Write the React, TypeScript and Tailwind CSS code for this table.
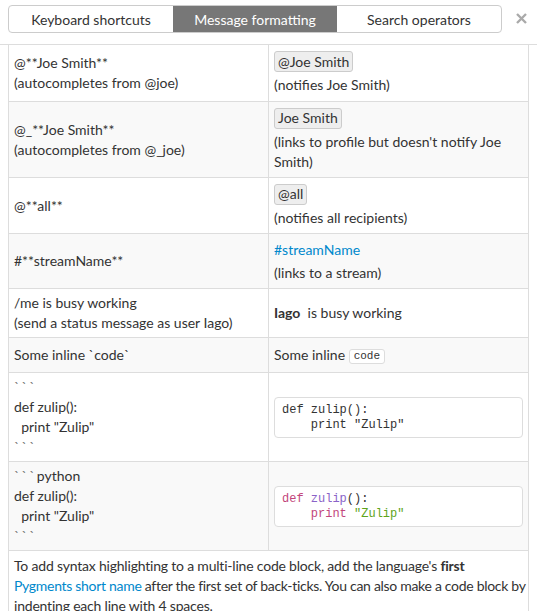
import React from "react";

const Pill = ({ children }: { children: React.ReactNode }) => (
  <span className="inline-flex items-center h-[21px] px-[3px] rounded-[3px] border border-[#ccc] bg-[#eeeeee] leading-none">
    {children}
  </span>
);

const Row = ({
  h,
  gray,
  left,
  right,
}: {
  h: string;
  gray?: boolean;
  left: React.ReactNode;
  right: React.ReactNode;
}) => (
  <div className={`flex border-b border-[#ddd] ${h} ${gray ? "bg-[#f9f9f9]" : "bg-white"}`}>
    <div className="w-[260px] shrink-0 border-r border-[#ddd] px-[5px] flex flex-col justify-center">{left}</div>
    <div className="flex-1 min-w-0 px-[5px] flex flex-col justify-center">{right}</div>
  </div>
);

const L = ({ children, cls = "" }: { children: React.ReactNode; cls?: string }) => (
  <div className={`leading-[20px] whitespace-nowrap ${cls}`}>{children}</div>
);

const Code = ({ children }: { children: React.ReactNode }) => (
  <div className="border border-[#ddd] rounded-[4px] bg-white pl-[7px] pt-[5px] pb-[4px] font-['Liberation_Mono',monospace] text-[12px] leading-[15px] text-[#333] whitespace-pre">
    {children}
  </div>
);

export default function App() {
  return (
    <div className="w-[537px] h-[611px] overflow-hidden bg-white font-['Lato',sans-serif] text-[14px] text-[#333]">
      <div className="h-[44px] flex items-start">
        <div className="ml-[8px] mt-[5px] flex h-[28px] w-[494px] border border-[#ccc] rounded-[4px] overflow-hidden">
          <div className="flex-1 flex items-center justify-center text-[#333]">Keyboard shortcuts</div>
          <div className="flex-1 flex items-center justify-center bg-[#777] text-white">Message formatting</div>
          <div className="flex-1 flex items-center justify-center text-[#333]">Search operators</div>
        </div>
        <div className="ml-[14px] mt-[13px]">
          <svg width="11" height="11" viewBox="0 0 11 11">
            <path d="M1 1 L10 10 M10 1 L1 10" stroke="#aaa" strokeWidth="2.4" strokeLinecap="butt" />
          </svg>
        </div>
      </div>
      <div className="border-t border-[#ddd]">
        <div className="ml-[8px] w-[521px] border-x border-[#ddd]">
          <Row
            h="h-[57px]"
            left={
              <>
                <L>@**Joe Smith**</L>
                <L>(autocompletes from @joe)</L>
              </>
            }
            right={
              <>
                <div><Pill>@Joe Smith</Pill></div>
                <L cls="mt-[3px]">(notifies Joe Smith)</L>
              </>
            }
          />
          <Row
            h="h-[76px]"
            gray
            left={
              <>
                <L>@_**Joe Smith**</L>
                <L>(autocompletes from @_joe)</L>
              </>
            }
            right={
              <>
                <div><Pill>Joe Smith</Pill></div>
                <L cls="mt-[3px]">(links to profile but doesn't notify Joe</L>
                <L>Smith)</L>
              </>
            }
          />
          <Row
            h="h-[56px]"
            left={<L>@**all**</L>}
            right={
              <>
                <div><Pill>@all</Pill></div>
                <L cls="mt-[3px]">(notifies all recipients)</L>
              </>
            }
          />
          <Row
            h="h-[55px]"
            gray
            left={<L>#**streamName**</L>}
            right={
              <>
                <L cls="text-[#0088cc]">#streamName</L>
                <L cls="mt-[3px]">(links to a stream)</L>
              </>
            }
          />
          <Row
            h="h-[49px]"
            left={
              <>
                <L>/me is busy working</L>
                <L>(send a status message as user Iago)</L>
              </>
            }
            right={
              <L>
                <span className="font-bold">Iago</span>&nbsp; is busy working
              </L>
            }
          />
          <Row
            h="h-[35px]"
            gray
            left={<L>Some inline `code`</L>}
            right={
              <L>
                Some inline{" "}
                <span className="inline-block border border-[#ddd] rounded-[3px] bg-white px-[4px] font-['Liberation_Mono',monospace] text-[11px] leading-[13px] align-[1px]">
                  code
                </span>
              </L>
            }
          />
          <Row
            h="h-[89px]"
            left={
              <>
                <L cls="tracking-[2px] text-[#777]">```</L>
                <L>def zulip():</L>
                <L>&nbsp;&nbsp;print "Zulip"</L>
                <L cls="tracking-[2px] text-[#777]">```</L>
              </>
            }
            right={
              <Code>
                {"def zulip():\n    print \"Zulip\""}
              </Code>
            }
          />
          <Row
            h="h-[89px]"
            gray
            left={
              <>
                <L>
                  <span className="tracking-[2px] text-[#777]">```</span>python
                </L>
                <L>def zulip():</L>
                <L>&nbsp;&nbsp;print "Zulip"</L>
                <L cls="tracking-[2px] text-[#777]">```</L>
              </>
            }
            right={
              <Code>
                <span className="text-[#c2457b]">def</span>{" "}
                <span className="text-[#8a63c8]">zulip</span>
                <span>():</span>
                {"\n    "}
                <span className="text-[#c2457b]">print</span>{" "}
                <span className="text-[#5ea41b]">"Zulip"</span>
              </Code>
            }
          />
          <div className="px-[5px] pt-[5px] pb-[6px]">
            <L cls="tracking-[-0.2px]">
              To add syntax highlighting to a multi-line code block, add the language's{" "}
              <span className="font-bold">first</span>
            </L>
            <L cls="tracking-[-0.3px]">
              <span className="text-[#0088cc]">Pygments short name</span> after the first set of back-ticks. You can also make a code block by
            </L>
            <L cls="tracking-[-0.2px]">indenting each line with 4 spaces.</L>
          </div>
        </div>
      </div>
    </div>
  );
}
